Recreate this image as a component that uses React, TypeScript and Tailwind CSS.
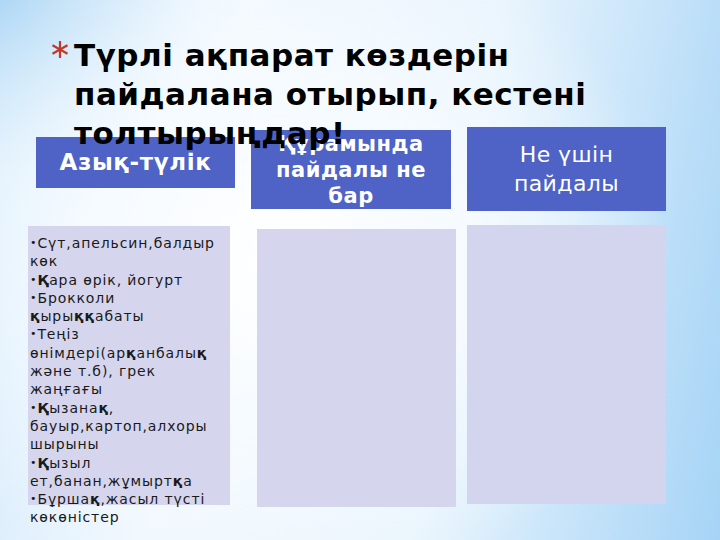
const foods: string[][] = [
  ["Сүт,апельсин,балдыр", "көк"],
  ["Қара өрік, йогурт"],
  ["Брокколи", "қырыққабаты"],
  ["Теңіз", "өнімдері(арқанбалық", "және т.б), грек", "жаңғағы"],
  ["Қызанақ,", "бауыр,картоп,алхоры", "шырыны"],
  ["Қызыл", "ет,банан,жұмыртқа"],
  ["Бұршақ,жасыл түсті", "көкөністер"],
];

// the қ letters come out heavier in the slide, keep that look
const Line = ({ text }: { text: string }) => (
  <>
    {text.split(/(қ|Қ)/).map((part, i) =>
      part === "қ" || part === "Қ" ? (
        <span key={i} className="font-bold">
          {part}
        </span>
      ) : (
        <span key={i}>{part}</span>
      )
    )}
  </>
);

const Asterisk = () => (
  <svg width="18" height="17" viewBox="0 0 18 17" className="shrink-0 mt-[5px]">
    <g stroke="#c0392b" strokeWidth="2.2" strokeLinecap="butt">
      <line x1="9" y1="0" x2="9" y2="17" />
      <line x1="1.5" y1="4.2" x2="16.5" y2="12.8" />
      <line x1="1.5" y1="12.8" x2="16.5" y2="4.2" />
    </g>
  </svg>
);

export default function App() {
  return (
    <div className="relative w-[720px] h-[540px] overflow-hidden bg-[radial-gradient(ellipse_55%_65%_at_38%_48%,#ffffff_0%,#f6fbff_45%,rgba(246,251,255,0)_100%),radial-gradient(ellipse_28%_32%_at_0%_0%,#b0d8f5_0%,rgba(176,216,245,0)_100%),linear-gradient(100deg,#d3eafb_0%,#f1f8fe_30%,#e8f4fd_62%,#a6d4f6_100%)] font-['DejaVu_Sans',sans-serif]">
      {/* Title */}
      <div className="relative z-10 h-[90px] pt-[36px] pl-[51px] flex items-start gap-[5px]">
        <Asterisk />
        <h1 className="w-[610px] text-[31px] leading-[39px] font-bold tracking-[0.5px] text-black">
          Түрлі ақпарат көздерін пайдалана отырып, кестені толтырыңдар!
        </h1>
      </div>

      {/* Table */}
      <div className="absolute left-[28px] top-[127px] flex items-start">
        {/* Column 1 */}
        <div className="w-[208px] flex flex-col">
          <div className="ml-[8px] mt-[10px] w-[199px] h-[51px] bg-[#4e63c5] flex items-center justify-center text-white text-[23px] font-bold tracking-[0.6px]">
            Азық-түлік
          </div>
          <div className="mt-[38px] w-[202px] h-[279px] bg-[#d5d6ee] pt-[8px] pl-[2px] text-[14px] leading-[18.3px] tracking-[0.9px] text-[#1a1a1a]">
            {foods.map((item, i) => (
              <div key={i}>
                {item.map((line, j) => (
                  <div key={j} className="whitespace-nowrap">
                    {j === 0 && <span className="text-[11px] align-[2px]">•</span>}
                    <Line text={line} />
                  </div>
                ))}
              </div>
            ))}
          </div>
        </div>

        {/* Column 2 */}
        <div className="ml-[15px] w-[205px] flex flex-col">
          <div className="mt-[3px] w-[200px] h-[79px] bg-[#4e63c5] flex items-center justify-center text-center text-white text-[21px] leading-[26px] font-bold tracking-[0.5px]">
            Құрамында
            <br />
            пайдалы не
            <br />
            бар
          </div>
          <div className="ml-[6px] mt-[20px] w-[199px] h-[278px] bg-[#d5d6ee]" />
        </div>

        {/* Column 3 */}
        <div className="ml-[11px] w-[199px] flex flex-col">
          <div className="w-[199px] h-[84px] bg-[#4e63c5] flex items-center justify-center text-center text-white text-[22px] leading-[29px] tracking-[0.4px]">
            Не үшін
            <br />
            пайдалы
          </div>
          <div className="mt-[14px] w-[199px] h-[279px] bg-[#d3d5ee]" />
        </div>
      </div>
    </div>
  );
}
